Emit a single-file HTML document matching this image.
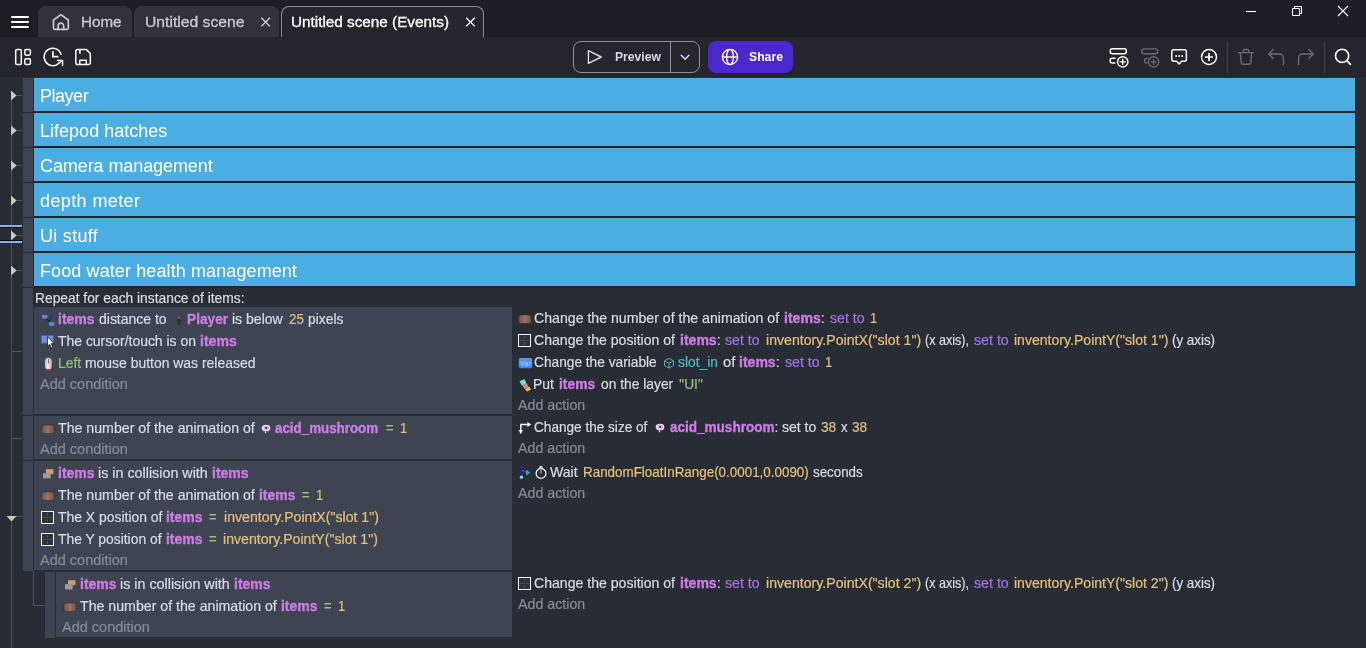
<!DOCTYPE html>
<html lang="en"><head><meta charset="utf-8"><title>Untitled scene (Events)</title>
<style>
html,body{margin:0;padding:0}
body{width:1366px;height:648px;overflow:hidden;position:relative;background:#282c34;font-family:"Liberation Sans",sans-serif;color:#dcdfe4}
div,span,svg,i{position:absolute;box-sizing:border-box;display:block}
svg{overflow:visible}
#titlebar{left:0;top:0;width:1366px;height:37px;background:#1d1d26}
#toolbar{left:0;top:37px;width:1366px;height:40px;background:#25252e}
.tab{top:6px;height:31px;background:#32323b;border-radius:8px 8px 0 0}
.tab.active{background:#25252e;border:1px solid #8b8b93;border-bottom:none}
.tt{font-size:14px;line-height:16px;white-space:pre;color:#c9c9cf;transform-origin:0 0;-webkit-text-stroke:.3px}
.btn{top:41px;height:32px;border-radius:8px}
.bt{font-weight:bold;white-space:pre;line-height:16px;font-size:13px;transform-origin:0 0}
#preview{left:573px;width:127px;border:1px solid #938f9f}
#preview i{left:96px;top:-1px;width:1px;height:32px;background:#938f9f}
#share{left:708px;width:85px;background:#4b27cc}
.vsep{top:41px;width:1px;height:32px;background:#3e4252}
.handle{background:#3e4452}
.group{left:34px;width:1321px;height:33px;background:#4aaee3}
.gt{color:#fff;font-size:18px;line-height:22px;white-space:pre;will-change:transform}
.gline{left:34px;width:1321px;height:2px;background:#25222a}
.cond{background:#3e4452}
.t{white-space:pre;font-size:13.75px;line-height:16px;color:#d8dbe6;transform-origin:0 0;-webkit-text-stroke:.2px}
.o{color:#cd7de5;font-weight:bold;-webkit-text-stroke:.35px}
.n{color:#e5c07b}
.s{color:#98c379}
.v{color:#56b6c2}
.op{color:#a274e6}
.add{color:#878b99}
.tl{background:#4f5460}
</style></head>
<body>
<div id="titlebar"></div>
<svg style="left:10px;top:14px" width="20" height="16" viewBox="10 14 20 16"><path d="M12 17H28M12 22H28M12 27H28" stroke="#fff" stroke-width="2" stroke-linecap="round"/></svg>
<div class="tab" style="left:38px;width:94px"></div>
<div class="tab" style="left:134px;width:145px"></div>
<div class="tab active" style="left:281px;width:203px"></div>
<svg style="left:52px;top:13px" width="18" height="18" viewBox="52 13 18 18"><g fill="none" stroke="#c9c9cf" stroke-width="1.7" stroke-linejoin="round" stroke-linecap="round"><path d="M60.9 14.6 L68.3 20 V28 a1.4 1.4 0 0 1 -1.4 1.4 H54.9 a1.4 1.4 0 0 1 -1.4 -1.4 V20 Z"/><path d="M58.1 29.4 V26 a2.8 2.8 0 0 1 5.6 0 V29.4"/></g></svg>
<span class="tt" style="left:80.7px;top:14px;transform:scaleX(1.0833);color:#c9c9cf">Home</span>
<span class="tt" style="left:144.6px;top:14px;transform:scaleX(1.1207);color:#c9c9cf">Untitled scene</span>
<span class="tt" style="left:291.3px;top:14px;transform:scaleX(1.0916);color:#fff">Untitled scene (Events)</span>
<svg style="left:260px;top:16px" width="12" height="12" viewBox="260 16 12 12"><path d="M261.3 17.8 L269.9 26.4 M269.9 17.8 L261.3 26.4" stroke="#d4d4d8" stroke-width="1.3" fill="none"/></svg>
<svg style="left:465px;top:16px" width="12" height="12" viewBox="465 16 12 12"><path d="M466.2 17.8 L474.8 26.4 M474.8 17.8 L466.2 26.4" stroke="#fff" stroke-width="1.3" fill="none"/></svg>
<svg style="left:1240px;top:0px" width="120" height="30" viewBox="1240 0 120 30"><g stroke="#fff" stroke-width="1.1" fill="none"><path d="M1246 11.5H1256"/><rect x="1292.5" y="8.5" width="7" height="7" rx=".5"/><path d="M1294.5 8V7a.5 .5 0 0 1 .5-.5H1301a.5 .5 0 0 1 .5 .5V13a.5 .5 0 0 1-.5 .5H1300"/><path d="M1338 6L1348 16M1348 6L1338 16"/></g></svg>
<div id="toolbar"></div>
<svg style="left:14px;top:47px" width="18" height="20" viewBox="14 47 18 20"><g fill="none" stroke="#fff" stroke-width="1.5"><rect x="15.7" y="49.4" width="5.6" height="15.2" rx="1.4"/><rect x="24.8" y="49.4" width="5.6" height="5.8" rx="1.4"/><rect x="24.8" y="58.8" width="5.6" height="5.8" rx="1.4"/></g></svg>
<svg style="left:42px;top:46px" width="24" height="22" viewBox="42 46 24 22"><g fill="none" stroke="#fff" stroke-width="1.4" stroke-linecap="round" stroke-linejoin="round"><path d="M61.1 54.3 A8.7 8.7 0 1 0 58.9 63.2"/><path d="M57.6 60.5 H62.6 V65.5"/><path d="M62.4 60.7 L58.9 63.3"/><path d="M52.9 51.3 V56.7 H58.4" stroke-width="1.7" stroke-linecap="butt" stroke-linejoin="miter"/></g></svg>
<svg style="left:74px;top:47px" width="18" height="20" viewBox="74 47 18 20"><g fill="none" stroke="#fff" stroke-width="1.5" stroke-linejoin="round"><path d="M77.6 49.4 H86.2 L90.3 53.5 V62.8 a1.8 1.8 0 0 1 -1.8 1.8 H77.6 a1.8 1.8 0 0 1 -1.8 -1.8 V51.2 a1.8 1.8 0 0 1 1.8 -1.8 Z"/><path d="M79.9 49.6 V53.8"/><path d="M79.8 64.4 V60.2 H86.3 V64.4"/></g></svg>
<div class="btn" id="preview"><i></i></div>
<svg style="left:586px;top:49px" width="18" height="17" viewBox="586 49 18 17"><path d="M588.4 50.6 L601.2 57 L588.4 63.4 Z" fill="none" stroke="#ddd8ee" stroke-width="1.4" stroke-linejoin="round"/></svg>
<svg style="left:680px;top:53px" width="11" height="8" viewBox="680 53 11 8"><path d="M681.3 55.3 L685.1 59.2 L688.9 55.3" fill="none" stroke="#ddd8ee" stroke-width="1.5" stroke-linecap="round" stroke-linejoin="round"/></svg>
<div class="btn" id="share"></div>
<svg style="left:721px;top:48px" width="18" height="18" viewBox="721 48 18 18"><g fill="none" stroke="#fff" stroke-width="1.4"><circle cx="730" cy="57" r="7.6"/><ellipse cx="730" cy="57" rx="3.4" ry="7.6"/><path d="M722.4 57 H737.6"/></g></svg>
<span class="bt" style="left:614.9px;top:48.7px;transform:scaleX(0.9354);color:#ddd8ee">Preview</span>
<span class="bt" style="left:748.9px;top:48.7px;transform:scaleX(0.9400);color:#fff">Share</span>
<svg style="left:1108px;top:46px" width="24" height="24" viewBox="1108 46 24 24"><g fill="none" stroke="#fff" stroke-width="1.5" stroke-linecap="round"><rect x="1110.2" y="48.7" width="16.2" height="5" rx="2.2"/><path d="M1115.1 58.2 H1112.2 a2 2 0 0 0 -2 2 V61 a2 2 0 0 0 2 2 H1114.7"/><circle cx="1122.7" cy="61.9" r="5.2" fill="#25252e"/><path d="M1122.7 59.3 V64.5 M1120.1 61.9 H1125.3" stroke-width="1.4"/></g></svg>
<svg style="left:1140px;top:46px" width="24" height="24" viewBox="1140 46 24 24"><g fill="none" stroke="#6c6c75" stroke-width="1.4" stroke-linecap="round"><rect x="1141.7" y="48.9" width="16" height="4.8" rx="2.2"/><path d="M1147.2 58.4 H1146.6 a2 2 0 0 0 -2 2 V61 a2 2 0 0 0 2 2 H1147"/><circle cx="1153.6" cy="61.9" r="5.2" fill="#25252e"/><path d="M1153.6 59.3 V64.5 M1151 61.9 H1156.2" stroke-width="1.3"/></g></svg>
<svg style="left:1170px;top:47px" width="20" height="20" viewBox="1170 47 20 20"><g fill="none" stroke="#fff" stroke-width="1.5" stroke-linejoin="round"><path d="M1173.6 49.8 H1184.6 a1.8 1.8 0 0 1 1.8 1.8 V59.4 a1.8 1.8 0 0 1 -1.8 1.8 H1181.6 L1179.1 63.9 L1176.6 61.2 H1173.6 a1.8 1.8 0 0 1 -1.8 -1.8 V51.6 a1.8 1.8 0 0 1 1.8 -1.8 Z"/></g><g fill="#fff"><rect x="1175.3" y="55.2" width="1.7" height="1.7"/><rect x="1178.3" y="55.2" width="1.7" height="1.7"/><rect x="1181.3" y="55.2" width="1.7" height="1.7"/></g></svg>
<svg style="left:1200px;top:48px" width="18" height="18" viewBox="1200 48 18 18"><g fill="none" stroke="#fff" stroke-width="1.5" stroke-linecap="round"><circle cx="1209" cy="57" r="7.5"/><path d="M1209 53.7 V60.3 M1205.7 57 H1212.3" stroke-width="1.7"/></g></svg>
<div class="vsep" style="left:1227px"></div>
<svg style="left:1236px;top:47px" width="20" height="20" viewBox="1236 47 20 20"><g fill="none" stroke="#6c6c75" stroke-width="1.4" stroke-linecap="round" stroke-linejoin="round"><path d="M1238.4 52.6 H1253.6"/><path d="M1243.2 52.4 V51.2 a1.7 1.7 0 0 1 1.7 -1.7 H1247.1 a1.7 1.7 0 0 1 1.7 1.7 V52.4"/><path d="M1240.3 52.8 L1241.2 62.6 a1.8 1.8 0 0 0 1.8 1.6 H1249 a1.8 1.8 0 0 0 1.8 -1.6 L1251.7 52.8"/></g></svg>
<svg style="left:1266px;top:47px" width="20" height="20" viewBox="1266 47 20 20"><g fill="none" stroke="#6c6c75" stroke-width="1.4" stroke-linecap="round" stroke-linejoin="round"><path d="M1273.2 49.6 L1268.8 54 L1273.2 58.4"/><path d="M1269 54 H1279.4 a4 4 0 0 1 4 4 V64.4"/></g></svg>
<svg style="left:1296px;top:47px" width="20" height="20" viewBox="1296 47 20 20"><g fill="none" stroke="#6c6c75" stroke-width="1.4" stroke-linecap="round" stroke-linejoin="round"><path d="M1308.8 49.6 L1313.2 54 L1308.8 58.4"/><path d="M1313 54 H1302.6 a4 4 0 0 0 -4 4 V64.4"/></g></svg>
<div class="vsep" style="left:1324px"></div>
<svg style="left:1333px;top:47px" width="20" height="20" viewBox="1333 47 20 20"><g fill="none" stroke="#fff" stroke-width="1.6" stroke-linecap="round"><circle cx="1342.1" cy="55.8" r="6.6"/><path d="M1346.9 60.6 L1350.4 64.4"/></g></svg>
<div class="tl" style="left:11px;top:100px;width:1px;height:548px;"></div>
<div class="handle" style="left:23px;top:78px;width:10px;height:34px;"></div>
<div class="group" style="left:34px;top:78px;width:1321px;height:33px;"></div>
<div class="gline" style="left:34px;top:111px;width:1321px;height:2px;"></div>
<span class="gt" style="left:39.6px;top:85px;letter-spacing:-0.480px">Player</span>
<svg style="left:10px;top:90px" width="14" height="12" viewBox="10 90 14 12"><path d="M16.5 95.5 H22.5" stroke="#4f5460" stroke-width="1"/><path d="M11 90.5 L16.6 95.5 L11 100.5 Z" fill="#c8c8c8"/></svg>
<div class="handle" style="left:23px;top:113px;width:10px;height:34px;"></div>
<div class="group" style="left:34px;top:113px;width:1321px;height:33px;"></div>
<div class="gline" style="left:34px;top:146px;width:1321px;height:2px;"></div>
<span class="gt" style="left:39.6px;top:120px;letter-spacing:0.014px">Lifepod hatches</span>
<svg style="left:10px;top:125px" width="14" height="12" viewBox="10 125 14 12"><path d="M16.5 130.5 H22.5" stroke="#4f5460" stroke-width="1"/><path d="M11 125.5 L16.6 130.5 L11 135.5 Z" fill="#c8c8c8"/></svg>
<div class="handle" style="left:23px;top:148px;width:10px;height:34px;"></div>
<div class="group" style="left:34px;top:148px;width:1321px;height:33px;"></div>
<div class="gline" style="left:34px;top:181px;width:1321px;height:2px;"></div>
<span class="gt" style="left:39.6px;top:155px;letter-spacing:-0.088px">Camera management</span>
<svg style="left:10px;top:160px" width="14" height="12" viewBox="10 160 14 12"><path d="M16.5 165.5 H22.5" stroke="#4f5460" stroke-width="1"/><path d="M11 160.5 L16.6 165.5 L11 170.5 Z" fill="#c8c8c8"/></svg>
<div class="handle" style="left:23px;top:183px;width:10px;height:34px;"></div>
<div class="group" style="left:34px;top:183px;width:1321px;height:33px;"></div>
<div class="gline" style="left:34px;top:216px;width:1321px;height:2px;"></div>
<span class="gt" style="left:39.6px;top:190px;letter-spacing:0.390px">depth meter</span>
<svg style="left:10px;top:195px" width="14" height="12" viewBox="10 195 14 12"><path d="M16.5 200.5 H22.5" stroke="#4f5460" stroke-width="1"/><path d="M11 195.5 L16.6 200.5 L11 205.5 Z" fill="#c8c8c8"/></svg>
<div class="handle" style="left:23px;top:218px;width:10px;height:34px;"></div>
<div class="group" style="left:34px;top:218px;width:1321px;height:33px;"></div>
<div class="gline" style="left:34px;top:251px;width:1321px;height:2px;"></div>
<span class="gt" style="left:39.6px;top:225px;letter-spacing:0.286px">Ui stuff</span>
<div class="" style="left:0px;top:225px;width:22px;height:2px;background:#78b6fb"></div>
<div class="" style="left:0px;top:227px;width:22px;height:1px;background:#000"></div>
<div class="" style="left:0px;top:240px;width:22px;height:1px;background:#000"></div>
<div class="" style="left:0px;top:241px;width:22px;height:2px;background:#78b6fb"></div>
<svg style="left:10px;top:230px" width="14" height="12" viewBox="10 230 14 12"><path d="M16.5 235.5 H22.5" stroke="#4f5460" stroke-width="1"/><path d="M11 230.5 L16.6 235.5 L11 240.5 Z" fill="#c8c8c8"/></svg>
<div class="handle" style="left:23px;top:253px;width:10px;height:34px;"></div>
<div class="group" style="left:34px;top:253px;width:1321px;height:33px;"></div>
<div class="gline" style="left:34px;top:286px;width:1321px;height:2px;"></div>
<span class="gt" style="left:39.6px;top:260px;letter-spacing:0.104px">Food water health management</span>
<svg style="left:10px;top:265px" width="14" height="12" viewBox="10 265 14 12"><path d="M16.5 270.5 H22.5" stroke="#4f5460" stroke-width="1"/><path d="M11 265.5 L16.6 270.5 L11 275.5 Z" fill="#c8c8c8"/></svg>
<div class="handle" style="left:23px;top:288px;width:10px;height:127px;"></div>
<div class="cond" style="left:34px;top:307px;width:478px;height:107px;"></div>
<div class="handle" style="left:23px;top:416px;width:10px;height:44px;"></div>
<div class="cond" style="left:34px;top:416px;width:478px;height:43px;"></div>
<div class="handle" style="left:23px;top:461px;width:10px;height:110px;"></div>
<div class="cond" style="left:34px;top:461px;width:478px;height:109px;"></div>
<div class="handle" style="left:45px;top:572px;width:10px;height:66px;"></div>
<div class="cond" style="left:56px;top:572px;width:456px;height:65px;"></div>
<div class="tl" style="left:11px;top:351px;width:11px;height:1px;"></div>
<div class="tl" style="left:11px;top:438px;width:11px;height:1px;"></div>
<svg style="left:4px;top:512px" width="20" height="12" viewBox="4 512 20 12"><path d="M16 516.5 H22.5" stroke="#4f5460" stroke-width="1"/><path d="M6.5 516 H16.5 L11.5 521.6 Z" fill="#c8c8c8"/></svg>
<div class="tl" style="left:33px;top:571px;width:1px;height:35px;"></div>
<div class="tl" style="left:33px;top:605px;width:11px;height:1px;"></div>
<svg style="left:41px;top:314px" width="15" height="13" viewBox="41 314 15 13"><path d="M45 317 L52 324" stroke="#22242b" stroke-width="1.2"/><rect x="42" y="315" width="5.4" height="3.6" fill="#5f84da"/><rect x="49" y="322.2" width="5.4" height="3.6" fill="#5f84da"/><text x="48.4" y="320.6" font-size="6.5" font-family="Liberation Sans, sans-serif" fill="#23252c">?</text></svg>
<svg style="left:177px;top:315px" width="5" height="11" viewBox="177 315 5 11"><rect x="177.9" y="316.2" width="2.4" height="3" rx=".9" fill="#76602c"/><rect x="177.4" y="319" width="3.4" height="3.2" fill="#2c2e37"/><rect x="178.1" y="322" width="2" height="3" fill="#2c2e37"/></svg>
<svg style="left:41px;top:335px" width="14" height="14" viewBox="41 335 14 14"><rect x="41.5" y="335.5" width="11.8" height="7.6" fill="#6f8fe0" stroke="#4460c6" stroke-width="1"/><path d="M47.4 336.6 V346.4 L49.6 344.3 L51.2 347.9 L52.8 347.2 L51.2 343.7 H54.2 Z" fill="#fff" stroke="#111" stroke-width=".8" stroke-linejoin="round"/></svg>
<svg style="left:43px;top:357px" width="11" height="14" viewBox="43 357 11 14"><defs><linearGradient id="ms" x1="0" x2="1"><stop offset="0" stop-color="#a9a9a9"/><stop offset=".45" stop-color="#f4f4f4"/><stop offset="1" stop-color="#9c9c9c"/></linearGradient></defs><rect x="44.5" y="357.6" width="7.8" height="12.4" rx="3.8" fill="url(#ms)" stroke="#33353d" stroke-width=".6"/><rect x="47.9" y="358.6" width="1" height="5" fill="#666"/><ellipse cx="48.4" cy="369.6" rx="1.8" ry=".9" fill="#e03030"/></svg>
<svg style="left:518px;top:315px" width="14" height="9" viewBox="518 315 14 9"><defs><linearGradient id="br518_315" x1="0" x2="1" y1="0" y2="0"><stop offset="0" stop-color="#6a4b40"/><stop offset=".2" stop-color="#896452"/><stop offset=".42" stop-color="#906856"/><stop offset=".5" stop-color="#ae826f"/><stop offset=".58" stop-color="#906856"/><stop offset=".8" stop-color="#86604f"/><stop offset="1" stop-color="#64463a"/></linearGradient></defs><rect x="518.6" y="315.1" width="12.8" height="8.3" rx="2.2" fill="url(#br518_315)" stroke="#2b2731" stroke-opacity=".55" stroke-width=".9" style="filter:blur(.35px)"/></svg>
<svg style="left:518px;top:334px" width="13" height="13" viewBox="518 334 13 13"><rect x="518.5" y="334.5" width="12" height="12" fill="#2e323c" stroke="#f4f4f4" stroke-width="1"/><path d="M524.5 336 V345 M520 340.5 H529" stroke="#55514e" stroke-width="1" stroke-dasharray="3 1 1 1 3"/></svg>
<svg style="left:518px;top:358px" width="15" height="11" viewBox="518 358 15 11"><defs><linearGradient id="vg" x1="0" x2="0" y1="0" y2="1"><stop offset="0" stop-color="#5b97e6"/><stop offset="1" stop-color="#3388ff"/></linearGradient></defs><rect x="518.8" y="358" width="13.4" height="10.2" rx="1.6" fill="url(#vg)"/><text x="520.2" y="365.8" font-size="6.4" font-family="Liberation Sans, sans-serif" fill="#e4eeff" fill-opacity=".8" textLength="10.6">Var</text></svg>
<svg style="left:663px;top:357px" width="12" height="12" viewBox="663 357 12 12"><g fill="none" stroke="#4fb0bd" stroke-width="1" stroke-linejoin="round"><path d="M669 358.4 L673.5 360.8 V365.6 L669 368 L664.5 365.6 V360.8 Z"/><path d="M664.6 360.9 L669 363.2 L673.4 360.9 M669 363.2 V367.9"/></g></svg>
<svg style="left:518px;top:378px" width="14" height="14" viewBox="518 378 14 14"><path d="M519.6 381.2 L524.4 379 L526.6 383.4 L521.8 385.8 Z" fill="#7fd9d0"/><path d="M522.6 385.6 L526.8 383.6 L528.6 387 L524.4 389 Z" fill="#d98aa2"/><path d="M525 389 L529.4 386.8 L531.2 389.4 L526.8 391.4 Z" fill="#e9c84e"/></svg>
<svg style="left:41px;top:425px" width="14" height="9" viewBox="41 425 14 9"><defs><linearGradient id="br41_425" x1="0" x2="1" y1="0" y2="0"><stop offset="0" stop-color="#6a4b40"/><stop offset=".2" stop-color="#896452"/><stop offset=".42" stop-color="#906856"/><stop offset=".5" stop-color="#ae826f"/><stop offset=".58" stop-color="#906856"/><stop offset=".8" stop-color="#86604f"/><stop offset="1" stop-color="#64463a"/></linearGradient></defs><rect x="41.6" y="425.1" width="12.8" height="8.3" rx="2.2" fill="url(#br41_425)" stroke="#2b2731" stroke-opacity=".55" stroke-width=".9" style="filter:blur(.35px)"/></svg>
<svg style="left:261px;top:423.4px" width="10" height="12" viewBox="261 423.4 10 12"><ellipse cx="266" cy="429.09999999999997" rx="4.3" ry="3.2" fill="#5e6cd0"/><ellipse cx="266" cy="428.29999999999995" rx="4.3" ry="3.1" fill="#e6def6"/><ellipse cx="266.1" cy="428.2" rx="2.7" ry="2" fill="#efa3b4"/><ellipse cx="266.2" cy="428.4" rx="1.1" ry="1" fill="#4a1668"/><rect x="264.9" y="431.9" width="1.3" height="1.7" fill="#e4e4f6"/><rect x="266.2" y="431.7" width=".9" height="1.9" fill="#3a48b0"/></svg>
<svg style="left:517px;top:420px" width="16" height="16" viewBox="517 420 16 16"><path d="M520.8 430.6 V424.4 H528" fill="none" stroke="#f2f2f2" stroke-width="1.5"/><path d="M527.4 421.9 L531.2 424.4 L527.4 426.9 Z" fill="#f2f2f2"/><path d="M518.7 430 L520.8 434.2 L522.9 430 Z" fill="#f2f2f2"/></svg>
<svg style="left:655.3px;top:422.4px" width="10" height="12" viewBox="655.3 422.4 10 12"><ellipse cx="660.3" cy="428.09999999999997" rx="4.3" ry="3.2" fill="#5e6cd0"/><ellipse cx="660.3" cy="427.29999999999995" rx="4.3" ry="3.1" fill="#e6def6"/><ellipse cx="660.4" cy="427.2" rx="2.7" ry="2" fill="#efa3b4"/><ellipse cx="660.5" cy="427.4" rx="1.1" ry="1" fill="#4a1668"/><rect x="659.1999999999999" y="430.9" width="1.3" height="1.7" fill="#e4e4f6"/><rect x="660.5" y="430.7" width=".9" height="1.9" fill="#3a48b0"/></svg>
<svg style="left:41px;top:467px" width="16" height="16" viewBox="41 467 16 16"><rect x="46" y="469.2" width="7.4" height="5" fill="#c9a070"/><rect x="43" y="473.2" width="7.6" height="5.2" fill="#9c9c9c"/><rect x="46" y="473.2" width="4.6" height="1.2" fill="#d87878"/></svg>
<svg style="left:41px;top:492px" width="14" height="9" viewBox="41 492 14 9"><defs><linearGradient id="br41_492" x1="0" x2="1" y1="0" y2="0"><stop offset="0" stop-color="#6a4b40"/><stop offset=".2" stop-color="#896452"/><stop offset=".42" stop-color="#906856"/><stop offset=".5" stop-color="#ae826f"/><stop offset=".58" stop-color="#906856"/><stop offset=".8" stop-color="#86604f"/><stop offset="1" stop-color="#64463a"/></linearGradient></defs><rect x="41.6" y="492.1" width="12.8" height="8.3" rx="2.2" fill="url(#br41_492)" stroke="#2b2731" stroke-opacity=".55" stroke-width=".9" style="filter:blur(.35px)"/></svg>
<svg style="left:41px;top:511px" width="13" height="13" viewBox="41 511 13 13"><rect x="41.5" y="511.5" width="12" height="12" fill="#2e323c" stroke="#f4f4f4" stroke-width="1"/><path d="M47.5 513 V522 M43 517.5 H52" stroke="#55514e" stroke-width="1" stroke-dasharray="3 1 1 1 3"/></svg>
<svg style="left:41px;top:533px" width="13" height="13" viewBox="41 533 13 13"><rect x="41.5" y="533.5" width="12" height="12" fill="#2e323c" stroke="#f4f4f4" stroke-width="1"/><path d="M47.5 535 V544 M43 539.5 H52" stroke="#55514e" stroke-width="1" stroke-dasharray="3 1 1 1 3"/></svg>
<svg style="left:518px;top:465px" width="14" height="15" viewBox="518 465 14 15"><path d="M521.4 466 V476" stroke="#1c2aa0" stroke-width="1.3"/><circle cx="521.4" cy="477.2" r="1.6" fill="#8fe0ff"/><path d="M522.6 470.2 L526.5 472.6" stroke="#22a8ea" stroke-width="1.1" stroke-dasharray="1.6 1"/><path d="M526.2 469.8 L530.2 472.8 L526.2 475.6 Z" fill="#22a8ea"/></svg>
<svg style="left:535px;top:465px" width="13" height="15" viewBox="535 465 13 15"><g fill="none" stroke="#f2f2f2" stroke-width="1.3"><circle cx="541" cy="473.4" r="4.9"/></g><rect x="539.4" y="466.2" width="3.2" height="1.6" fill="#f2f2f2"/><rect x="540.4" y="470" width="1.2" height="3.6" fill="#b0b0b0"/></svg>
<svg style="left:63px;top:578px" width="16" height="16" viewBox="63 578 16 16"><rect x="68" y="580.2" width="7.4" height="5" fill="#c9a070"/><rect x="65" y="584.2" width="7.6" height="5.2" fill="#9c9c9c"/><rect x="68" y="584.2" width="4.6" height="1.2" fill="#d87878"/></svg>
<svg style="left:63px;top:603px" width="14" height="9" viewBox="63 603 14 9"><defs><linearGradient id="br63_603" x1="0" x2="1" y1="0" y2="0"><stop offset="0" stop-color="#6a4b40"/><stop offset=".2" stop-color="#896452"/><stop offset=".42" stop-color="#906856"/><stop offset=".5" stop-color="#ae826f"/><stop offset=".58" stop-color="#906856"/><stop offset=".8" stop-color="#86604f"/><stop offset="1" stop-color="#64463a"/></linearGradient></defs><rect x="63.6" y="603.1" width="12.8" height="8.3" rx="2.2" fill="url(#br63_603)" stroke="#2b2731" stroke-opacity=".55" stroke-width=".9" style="filter:blur(.35px)"/></svg>
<svg style="left:518px;top:577px" width="13" height="13" viewBox="518 577 13 13"><rect x="518.5" y="577.5" width="12" height="12" fill="#2e323c" stroke="#f4f4f4" stroke-width="1"/><path d="M524.5 579 V588 M520 583.5 H529" stroke="#55514e" stroke-width="1" stroke-dasharray="3 1 1 1 3"/></svg>
<div id="txt" style="left:0;top:0;width:1366px;height:648px;will-change:transform">
<span class="t" style="left:34.5px;top:291px;transform:scaleX(1.0039)">Repeat for each instance of items:</span>
<span class="t o" style="left:57.5px;top:312px;transform:scaleX(1.0200)">items</span>
<span class="t" style="left:98.9px;top:312px;transform:scaleX(1.0167)">distance to</span>
<span class="t o" style="left:186.8px;top:312px;transform:scaleX(0.9951)">Player</span>
<span class="t" style="left:232.0px;top:312px;transform:scaleX(1.0204)">is below</span>
<span class="t n" style="left:288.5px;top:312px;transform:scaleX(0.9667)">25</span>
<span class="t" style="left:307.6px;top:312px;transform:scaleX(1.0088)">pixels</span>
<span class="t" style="left:57.6px;top:334px;transform:scaleX(1.0140)">The cursor/touch is on</span>
<span class="t o" style="left:199.8px;top:334px;transform:scaleX(1.0229)">items</span>
<span class="t s" style="left:57.5px;top:356px;transform:scaleX(1.0091)">Left</span>
<span class="t" style="left:85.0px;top:356px;transform:scaleX(1.0132)">mouse button was released</span>
<span class="t add" style="left:40.3px;top:377px;transform:scaleX(1.0554)">Add condition</span>
<span class="t" style="left:534.4px;top:311px;transform:scaleX(1.0277)">Change the number of the animation of</span>
<span class="t" style="left:783.9px;top:311px;transform:scaleX(1.0237)"><b class="o">items</b>:</span>
<span class="t op" style="left:829.6px;top:311px;transform:scaleX(1.0273)">set to</span>
<span class="t n" style="left:870.1px;top:311px;transform:scaleX(0.9400)">1</span>
<span class="t" style="left:534.4px;top:333px;transform:scaleX(1.0248)">Change the position of</span>
<span class="t" style="left:679.6px;top:333px;transform:scaleX(1.0211)"><b class="o">items</b>:</span>
<span class="t op" style="left:725.3px;top:333px;transform:scaleX(1.0273)">set to</span>
<span class="t n" style="left:765.5px;top:333px;transform:scaleX(1.0282)">inventory.PointX("slot 1")</span>
<span class="t" style="left:924.8px;top:333px;transform:scaleX(0.9152)">(x axis),</span>
<span class="t op" style="left:974.2px;top:333px;transform:scaleX(1.0333)">set to</span>
<span class="t n" style="left:1013.6px;top:333px;transform:scaleX(1.0228)">inventory.PointY("slot 1")</span>
<span class="t" style="left:1171.7px;top:333px;transform:scaleX(0.9721)">(y axis)</span>
<span class="t" style="left:534.4px;top:355px;transform:scaleX(0.9967)">Change the variable</span>
<span class="t v" style="left:678.0px;top:355px;transform:scaleX(1.0051)">slot_in</span>
<span class="t" style="left:722.6px;top:355px;transform:scaleX(1.0667)">of</span>
<span class="t" style="left:739.2px;top:355px;transform:scaleX(1.0211)"><b class="o">items</b>:</span>
<span class="t op" style="left:784.9px;top:355px;transform:scaleX(1.0273)">set to</span>
<span class="t n" style="left:824.6px;top:355px;transform:scaleX(0.9400)">1</span>
<span class="t" style="left:533.4px;top:377px;transform:scaleX(1.0150)">Put</span>
<span class="t o" style="left:559.1px;top:377px;transform:scaleX(1.0057)">items</span>
<span class="t" style="left:600.7px;top:377px;transform:scaleX(1.0042)">on the layer</span>
<span class="t s" style="left:679.3px;top:377px;transform:scaleX(1.0000)">"UI"</span>
<span class="t add" style="left:517.8px;top:398px;transform:scaleX(1.0344)">Add action</span>
<span class="t" style="left:57.6px;top:421px;transform:scaleX(1.0298)">The number of the animation of</span>
<span class="t o" style="left:275.3px;top:421px;transform:scaleX(0.9708)">acid_mushroom</span>
<span class="t s" style="left:386.0px;top:421px;transform:scaleX(0.9400)">=</span>
<span class="t n" style="left:400.3px;top:421px;transform:scaleX(0.9400)">1</span>
<span class="t add" style="left:40.3px;top:442px;transform:scaleX(1.0554)">Add condition</span>
<span class="t" style="left:534.4px;top:420px;transform:scaleX(0.9886)">Change the size of</span>
<span class="t" style="left:669.8px;top:420px;transform:scaleX(0.9835)"><b class="o">acid_mushroom</b>:</span>
<span class="t" style="left:781.7px;top:420px;transform:scaleX(1.0182)">set to</span>
<span class="t n" style="left:820.9px;top:420px;transform:scaleX(0.9933)">38</span>
<span class="t" style="left:841.0px;top:420px;transform:scaleX(0.9400)">x</span>
<span class="t n" style="left:852.1px;top:420px;transform:scaleX(0.9933)">38</span>
<span class="t add" style="left:517.8px;top:441px;transform:scaleX(1.0344)">Add action</span>
<span class="t o" style="left:57.5px;top:466px;transform:scaleX(1.0200)">items</span>
<span class="t" style="left:98.1px;top:466px;transform:scaleX(1.0413)">is in collision with</span>
<span class="t o" style="left:211.8px;top:466px;transform:scaleX(1.0171)">items</span>
<span class="t" style="left:57.6px;top:488px;transform:scaleX(1.0298)">The number of the animation of</span>
<span class="t o" style="left:258.7px;top:488px;transform:scaleX(1.0143)">items</span>
<span class="t s" style="left:301.7px;top:488px;transform:scaleX(0.9400)">=</span>
<span class="t n" style="left:316.2px;top:488px;transform:scaleX(0.9400)">1</span>
<span class="t" style="left:57.6px;top:510px;transform:scaleX(1.0126)">The X position of</span>
<span class="t o" style="left:166.3px;top:510px;transform:scaleX(1.0143)">items</span>
<span class="t s" style="left:209.0px;top:510px;transform:scaleX(0.9400)">=</span>
<span class="t n" style="left:223.5px;top:510px;transform:scaleX(1.0268)">inventory.PointX("slot 1")</span>
<span class="t" style="left:57.6px;top:532px;transform:scaleX(1.0078)">The Y position of</span>
<span class="t o" style="left:165.8px;top:532px;transform:scaleX(1.0143)">items</span>
<span class="t s" style="left:208.8px;top:532px;transform:scaleX(0.9400)">=</span>
<span class="t n" style="left:222.9px;top:532px;transform:scaleX(1.0268)">inventory.PointY("slot 1")</span>
<span class="t add" style="left:40.3px;top:553px;transform:scaleX(1.0554)">Add condition</span>
<span class="t" style="left:550.1px;top:465px;transform:scaleX(1.0222)">Wait</span>
<span class="t n" style="left:582.7px;top:465px;transform:scaleX(0.9748)">RandomFloatInRange(0.0001,0.0090)</span>
<span class="t" style="left:813.4px;top:465px;transform:scaleX(0.9706)">seconds</span>
<span class="t add" style="left:517.8px;top:486px;transform:scaleX(1.0344)">Add action</span>
<span class="t o" style="left:79.5px;top:577px;transform:scaleX(1.0200)">items</span>
<span class="t" style="left:120.1px;top:577px;transform:scaleX(1.0413)">is in collision with</span>
<span class="t o" style="left:233.8px;top:577px;transform:scaleX(1.0171)">items</span>
<span class="t" style="left:79.6px;top:599px;transform:scaleX(1.0298)">The number of the animation of</span>
<span class="t o" style="left:280.7px;top:599px;transform:scaleX(1.0143)">items</span>
<span class="t s" style="left:323.7px;top:599px;transform:scaleX(0.9400)">=</span>
<span class="t n" style="left:338.2px;top:599px;transform:scaleX(0.9400)">1</span>
<span class="t add" style="left:62.3px;top:620px;transform:scaleX(1.0554)">Add condition</span>
<span class="t" style="left:534.4px;top:576px;transform:scaleX(1.0248)">Change the position of</span>
<span class="t" style="left:679.6px;top:576px;transform:scaleX(1.0211)"><b class="o">items</b>:</span>
<span class="t op" style="left:725.3px;top:576px;transform:scaleX(1.0273)">set to</span>
<span class="t n" style="left:765.5px;top:576px;transform:scaleX(1.0282)">inventory.PointX("slot 2")</span>
<span class="t" style="left:924.8px;top:576px;transform:scaleX(0.9152)">(x axis),</span>
<span class="t op" style="left:974.2px;top:576px;transform:scaleX(1.0333)">set to</span>
<span class="t n" style="left:1013.6px;top:576px;transform:scaleX(1.0228)">inventory.PointY("slot 2")</span>
<span class="t" style="left:1171.7px;top:576px;transform:scaleX(0.9721)">(y axis)</span>
<span class="t add" style="left:517.8px;top:597px;transform:scaleX(1.0344)">Add action</span>
</div>
</body></html>
